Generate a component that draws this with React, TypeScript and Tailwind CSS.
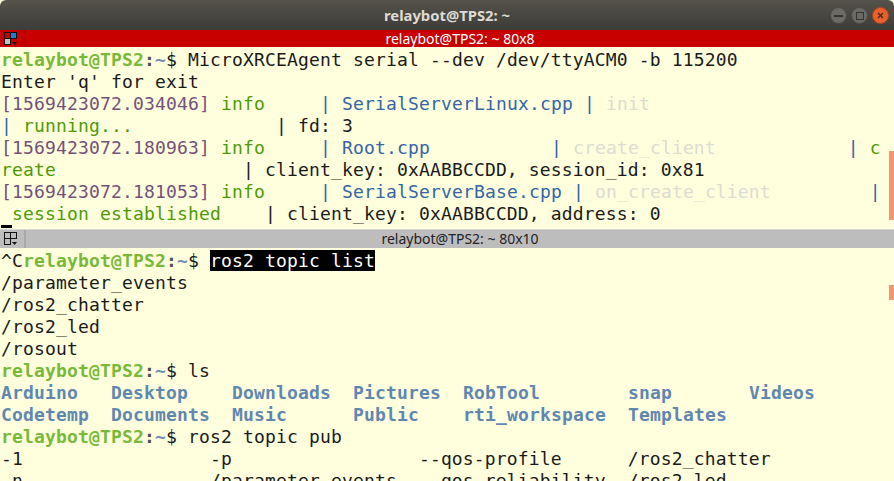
import React from 'react';

const Prompt = () => (
  <>
    <span className="font-bold text-[#78b93a]">relaybot@TPS2</span>
    <span className="font-bold text-[#4f4f4f]">:</span>
    <span className="font-bold text-[#6f8fb5]">~</span>
    $
  </>
);

const Info = () => <span className="text-[#4e9a06]">info</span>;
const File = ({ children }: { children: React.ReactNode }) => <span className="text-[#3465a4]">{children}</span>;
const Faint = ({ children }: { children: React.ReactNode }) => <span className="text-[#dcdcd0]">{children}</span>;
const Green = ({ children }: { children: React.ReactNode }) => <span className="text-[#4e9a06]">{children}</span>;
const Stamp = ({ children }: { children: React.ReactNode }) => <span className="text-[#75507b]">{children}</span>;
const Dir = ({ children }: { children: React.ReactNode }) => <span className="font-bold text-[#5f87b0]">{children}</span>;

function Row({ children }: { children?: React.ReactNode }) {
  return <div className="h-[22px] leading-[22px] whitespace-pre">{children}</div>;
}

function SplitIcon({ active }: { active: boolean }) {
  return (
    <svg width="14" height="14" viewBox="0 0 14 14" className="ml-[4px] shrink-0">
      <rect x="0.5" y="0.5" width="6" height="6" fill={active ? '#cc0000' : 'none'} stroke="#111" />
      <rect x="6.5" y="0.5" width="6" height="6" fill={active ? '#1e7fd0' : 'none'} stroke="#111" />
      <rect x="0.5" y="6.5" width="6" height="6" fill={active ? '#c0c0c0' : 'none'} stroke="#111" />
      <path d="M8 10h5l-2.5 3z" fill="#111" />
    </svg>
  );
}

function PaneBar({ active, title }: { active: boolean; title: string }) {
  return (
    <div
      className={`relative flex items-center shrink-0 ${
        active ? 'h-[17px] bg-[#c80000] text-white' : 'h-[19px] bg-[#bdbdbd] border-t border-[#d6d6d6] text-[#222]'
      }`}
    >
      <SplitIcon active={active} />
      <div className={`ml-[6px] w-[2px] self-stretch ${active ? 'bg-[#b40000]' : 'bg-[#a9a9a9]'}`} />
      <div className="flex-1 text-center text-[14px] tracking-normal font-['Noto_Sans',sans-serif] leading-none">{title}</div>
    </div>
  );
}

export default function App() {
  return (
    <div className="w-[894px] h-[481px] overflow-hidden flex flex-col bg-[#ffffdd] font-['DejaVu_Sans_Mono',monospace] text-[18px] tracking-[0.16px] text-[#1a1a1a]">
      <div className="relative h-[30px] shrink-0 flex items-center justify-center rounded-t-[6px] bg-gradient-to-b from-[#55524b] to-[#3d3c38]">
        <span className="font-['Noto_Sans',sans-serif] font-bold text-[14.8px] tracking-normal text-[#dfdbd2]">relaybot@TPS2: ~</span>
        <div className="absolute right-[5px] top-[7px] flex gap-[4px]">
          <div className="w-[17px] h-[17px] rounded-full bg-[#6b6a66] border border-[#4a4945] flex items-center justify-center">
            <div className="w-[9px] h-[2px] bg-[#35342f]" />
          </div>
          <div className="w-[17px] h-[17px] rounded-full bg-[#6b6a66] border border-[#4a4945] flex items-center justify-center">
            <div className="w-[8px] h-[8px] border border-[#35342f]" />
          </div>
          <div className="w-[17px] h-[17px] rounded-full bg-[#e9602c] border border-[#a8461f] flex items-center justify-center">
            <svg width="7" height="7" viewBox="0 0 7 7">
              <path d="M1 1l5 5M6 1L1 6" stroke="#3a2a20" strokeWidth="1.3" />
            </svg>
          </div>
        </div>
      </div>

      <PaneBar active title="relaybot@TPS2: ~ 80x8" />
      <div className="relative h-[182px] shrink-0 overflow-hidden pl-[1px] pt-[2px]">
        <Row><Prompt /> MicroXRCEAgent serial --dev /dev/ttyACM0 -b 115200</Row>
        <Row>Enter 'q' for exit</Row>
        <Row><Stamp>[1569423072.034046]</Stamp> <Info />     <File>|</File> <File>SerialServerLinux.cpp</File> <File>|</File> <Faint>init</Faint></Row>
        <Row><File>|</File> <Green>running...</Green>             | fd: 3</Row>
        <Row><Stamp>[1569423072.180963]</Stamp> <Info />     <File>|</File> <File>Root.cpp</File>           <File>|</File> <Faint>create_client</Faint>            <File>|</File> <Green>c</Green></Row>
        <Row><Green>reate</Green>                 | client_key: 0xAABBCCDD, session_id: 0x81</Row>
        <Row><Stamp>[1569423072.181053]</Stamp> <Info />     <File>|</File> <File>SerialServerBase.cpp</File> <File>|</File> <Faint>on_create_client</Faint>         <File>|</File></Row>
        <Row> <Green>session established</Green>    | client_key: 0xAABBCCDD, address: 0</Row>
        <div className="w-[11px] h-[3px] bg-black" />
        <div className="absolute right-0 top-[104px] w-[5px] h-[69px] bg-[#f4966a]" />
      </div>

      <PaneBar active={false} title="relaybot@TPS2: ~ 80x10" />
      <div className="relative flex-1 overflow-hidden pl-[1px] pt-[2px]">
        <Row>^C<Prompt /> <span className="bg-black text-white">ros2 topic list</span></Row>
        <Row>/parameter_events</Row>
        <Row>/ros2_chatter</Row>
        <Row>/ros2_led</Row>
        <Row>/rosout</Row>
        <Row><Prompt /> ls</Row>
        <Row><Dir>Arduino</Dir>   <Dir>Desktop</Dir>    <Dir>Downloads</Dir>  <Dir>Pictures</Dir>  <Dir>RobTool</Dir>        <Dir>snap</Dir>       <Dir>Videos</Dir></Row>
        <Row><Dir>Codetemp</Dir>  <Dir>Documents</Dir>  <Dir>Music</Dir>      <Dir>Public</Dir>    <Dir>rti_workspace</Dir>  <Dir>Templates</Dir></Row>
        <Row><Prompt /> ros2 topic pub</Row>
        <Row>-1                 -p                 --qos-profile      /ros2_chatter</Row>
        <Row>-n                 /parameter_events  --qos-reliability  /ros2_led</Row>
        <div className="absolute right-0 top-[37px] w-[5px] h-[15px] bg-[#f4966a]" />
      </div>
    </div>
  );
}
